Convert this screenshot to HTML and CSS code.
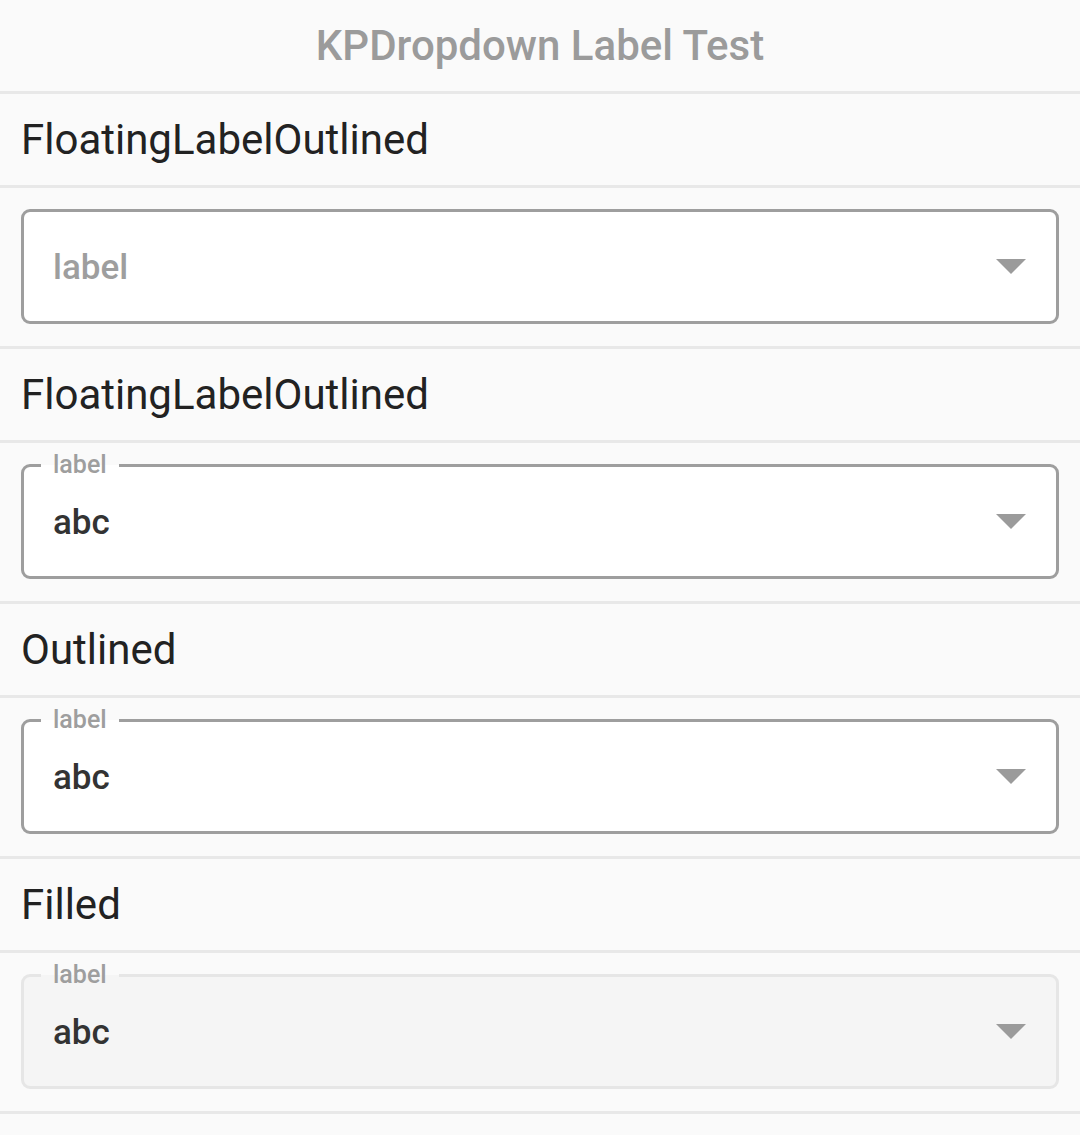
FILE: index.html
```html
<!DOCTYPE html>
<html>
<head>
<meta charset="utf-8">
<link rel="stylesheet" href="styles.css">
</head>
<body>
<div class="app">
  <header class="topbar">KPDropdown Label Test</header>

  <div class="section-title">FloatingLabelOutlined</div>
  <div class="field-row">
    <div class="dropdown outlined">
      <span class="placeholder">label</span>
      <svg class="caret" width="30" height="15" viewBox="0 0 30 15"><path d="M0 0H30L15 15Z" fill="#9b9b9b"/></svg>
    </div>
  </div>

  <div class="section-title">FloatingLabelOutlined</div>
  <div class="field-row">
    <div class="dropdown outlined">
      <span class="float-label">label</span>
      <span class="value">abc</span>
      <svg class="caret" width="30" height="15" viewBox="0 0 30 15"><path d="M0 0H30L15 15Z" fill="#9b9b9b"/></svg>
    </div>
  </div>

  <div class="section-title">Outlined</div>
  <div class="field-row">
    <div class="dropdown outlined">
      <span class="float-label">label</span>
      <span class="value">abc</span>
      <svg class="caret" width="30" height="15" viewBox="0 0 30 15"><path d="M0 0H30L15 15Z" fill="#9b9b9b"/></svg>
    </div>
  </div>

  <div class="section-title">Filled</div>
  <div class="field-row">
    <div class="dropdown filled">
      <span class="float-label">label</span>
      <span class="value">abc</span>
      <svg class="caret" width="30" height="15" viewBox="0 0 30 15"><path d="M0 0H30L15 15Z" fill="#9b9b9b"/></svg>
    </div>
  </div>
</div>
</body>
</html>
```
FILE: styles.css
```css
html, body {
  margin: 0;
  padding: 0;
  background: #fafafa;
}
body {
  font-family: Roboto, "Liberation Sans", sans-serif;
  width: 1080px;
  height: 1135px;
  overflow: hidden;
}
.app {
  display: flex;
  flex-direction: column;
}
.topbar {
  height: 91px;
  display: flex;
  align-items: center;
  justify-content: center;
  font-size: 42px;
  font-weight: 500;
  color: #9b9b9b;
  border-bottom: 3px solid #e8e8e8;
}
.section-title {
  height: 91px;
  display: flex;
  align-items: center;
  padding-left: 21px;
  font-size: 42px;
  color: #222222;
  border-bottom: 3px solid #e8e8e8;
}
.field-row {
  height: 161px;
  box-sizing: border-box;
  padding: 21px 21px 22px 21px;
  border-bottom: 3px solid #e8e8e8;
}
.dropdown {
  position: relative;
  height: 115px;
  box-sizing: border-box;
  border-radius: 9px;
  display: flex;
  align-items: center;
  padding: 0 30px 0 29px;
}
.outlined {
  background: #ffffff;
  border: 3px solid #9e9e9e;
}
.filled {
  background: #f5f5f5;
  border: 3px solid #e6e6e6;
}
.placeholder, .value {
  flex: 1;
  font-size: 35px;
  line-height: 40px;
  font-weight: 500;
  padding-top: 2px;
}
.placeholder {
  color: #9e9e9e;
}
.value {
  color: #333333;
}
.float-label {
  position: absolute;
  left: 17px;
  top: -17px;
  padding: 0 12px;
  font-size: 25px;
  line-height: 30px;
  font-weight: 500;
  color: #9e9e9e;
}
.outlined .float-label {
  background: linear-gradient(#fafafa 0 50%, #ffffff 50% 100%);
}
.filled .float-label {
  background: linear-gradient(#fafafa 0 50%, #f5f5f5 50% 100%);
}
.caret {
  display: block;
  flex: none;
}
```
